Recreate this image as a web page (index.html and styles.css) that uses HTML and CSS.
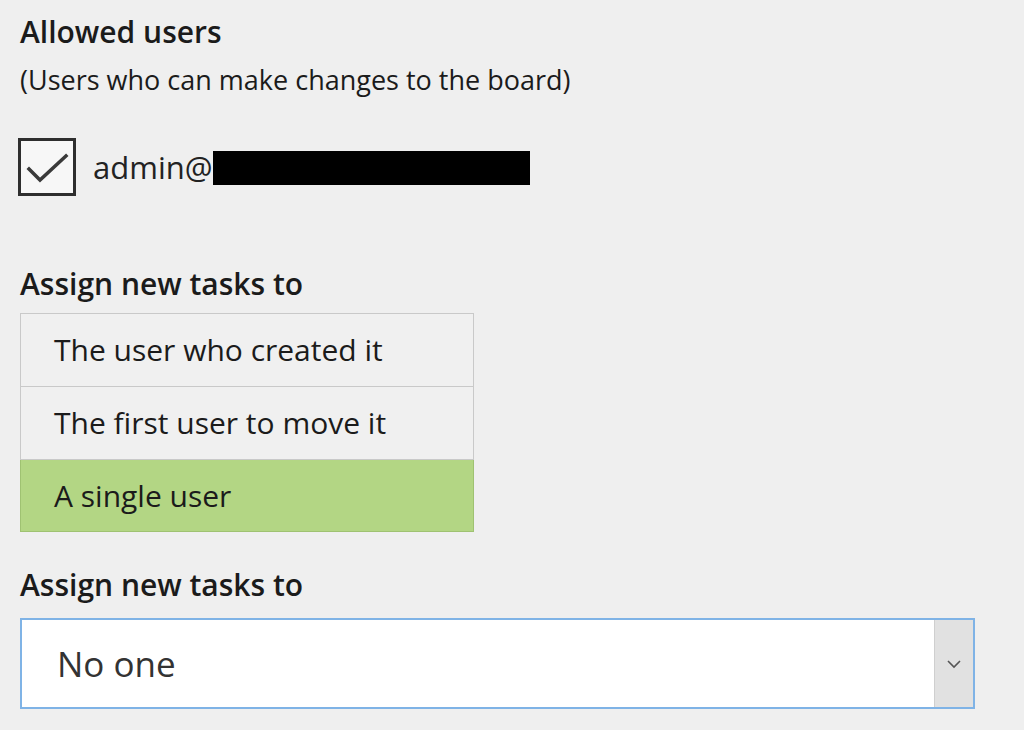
FILE: index.html
```html
<!DOCTYPE html>
<html lang="en">
<head>
  <meta charset="UTF-8" />
  <title>Board settings</title>
  <link rel="stylesheet" href="styles.css">
</head>
<body>
  <main class="settings">
    <section class="allowed">
      <h2>Allowed users</h2>
      <p class="hint">(Users who can make changes to the board)</p>
      <label class="user-row">
        <span class="checkbox checked">
          <svg viewBox="0 0 52 52" width="52" height="52">
            <path d="M8 28 L19 39 L45 15" fill="none" stroke="#3a3a3a" stroke-width="3.5" stroke-linecap="square" />
          </svg>
        </span>
        <span class="email">admin@<span class="redacted"></span></span>
      </label>
    </section>

    <section class="assign">
      <h3>Assign new tasks to</h3>
      <ul class="options">
        <li>The user who created it</li>
        <li>The first user to move it</li>
        <li class="selected">A single user</li>
      </ul>
    </section>

    <section class="assign">
      <h3>Assign new tasks to</h3>
      <div class="select">
        <span class="value">No one</span>
        <span class="arrow">
          <svg viewBox="0 0 16 10" width="16" height="10">
            <path d="M2 2 L8 8 L14 2" fill="none" stroke="#555" stroke-width="1.6" />
          </svg>
        </span>
      </div>
    </section>
  </main>
</body>
</html>
```

FILE: styles.css
```css
body {
  margin: 0;
  background: #efefef;
  color: #1b1b1b;
  font-family: "Open Sans", "Noto Sans", sans-serif;
}
.settings {
  padding: 0 20px;
}
h2, h3 {
  margin: 0;
  font-weight: 600;
}
h2 {
  font-size: 30px;
  line-height: 40px;
  padding-top: 12px;
}
.hint {
  margin: 0;
  font-size: 27px;
  line-height: 34px;
  padding-top: 11px;
}
.user-row {
  display: flex;
  align-items: center;
  margin-top: 41px;
  margin-left: -2px;
}
.checkbox {
  width: 52px;
  height: 52px;
  border: 3px solid #2e2e2e;
  background: #f7f7f7;
  display: flex;
}
.email {
  display: flex;
  align-items: center;
  margin-left: 17px;
  font-size: 31px;
  color: #222;
}
.redacted {
  display: inline-block;
  width: 317px;
  height: 34px;
  margin-top: 1px;
  background: #000;
}
.assign h3 {
  font-size: 30px;
  line-height: 38px;
}
.allowed + .assign {
  margin-top: 69px;
}
.options {
  list-style: none;
  margin: 10px 0 0;
  padding: 0;
  width: 454px;
}
.options li {
  height: 72px;
  line-height: 72px;
  padding-left: 33px;
  font-size: 30px;
  border: 1px solid #c9c9c9;
  border-top-width: 0;
  background: #f0f0f0;
}
.options li:first-child {
  border-top-width: 1px;
}
.options li.selected {
  height: 71px;
  line-height: 71px;
  background: #b3d684;
  border-color: #9fc272;
}
.assign + .assign {
  margin-top: 34px;
}
.select {
  display: flex;
  margin-top: 14px;
  width: 951px;
  height: 87px;
  border: 2px solid #7fb3e6;
  background: #fff;
}
.select .value {
  flex: 1;
  padding-left: 35px;
  font-size: 35px;
  line-height: 87px;
  color: #333;
}
.select .arrow {
  width: 38px;
  display: flex;
  align-items: center;
  justify-content: center;
  background: #e1e1e1;
  border-left: 1px solid #cfcfcf;
}
```
